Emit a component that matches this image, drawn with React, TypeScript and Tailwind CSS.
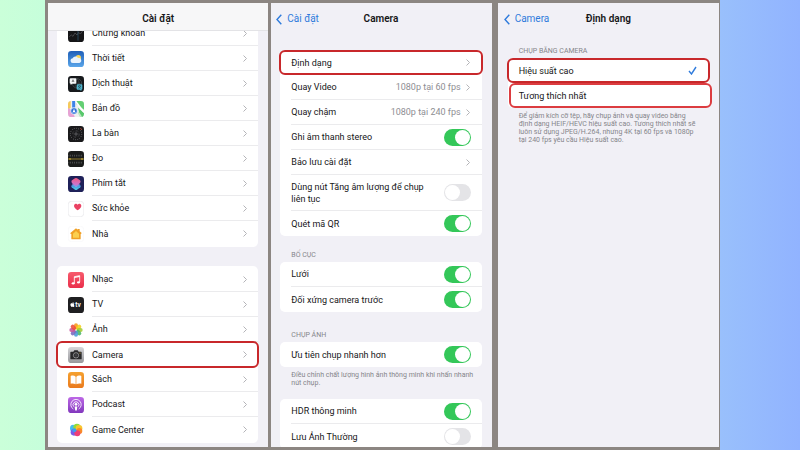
import type { ReactNode } from "react"
import { clsx } from "clsx"
import { FaApple } from "react-icons/fa"

type IconName =
  | "stocks"
  | "weather"
  | "translate"
  | "maps"
  | "compass"
  | "measure"
  | "shortcuts"
  | "health"
  | "home"
  | "music"
  | "tv"
  | "photos"
  | "camera"
  | "books"
  | "podcast"
  | "gamecenter"

const petals = ["#f79a1e", "#f4d21f", "#a5cc39", "#4fb86b", "#4c9fd8", "#7d6bc0", "#c65a9f", "#ee4f3d"]

const artwork: Record<IconName, ReactNode> = {
  stocks: (
    <>
      <rect width="48" height="48" rx="10" fill="#151517" />
      <path d="M4 32l6-5 5 4 6-10 6 6 5-8 5 5 7-9" fill="none" stroke="#5b5b60" strokeWidth="2" />
      <path d="M30 4v40" stroke="#2f5a78" strokeWidth="2" />
    </>
  ),
  weather: (
    <>
      <rect width="48" height="48" rx="10" fill="url(#sky)" />
      <circle cx="31" cy="20" r="8" fill="#fbd65a" />
      <path d="M15 36a7 7 0 0 1-1-14 9 9 0 0 1 16-1 7.500 7.500 0 0 1 4 15z" fill="#e9f3fd" />
    </>
  ),
  translate: (
    <>
      <rect width="48" height="48" rx="10" fill="#16191c" />
      <circle cx="27" cy="22" r="14" fill="none" stroke="#4c5458" strokeWidth="2" />
      <path d="M13 22h28M27 8c-8 8-8 20 0 28M27 8c8 8 8 20 0 28" fill="none" stroke="#4c5458" strokeWidth="1.500" />
      <path d="M8 7h14a3 3 0 0 1 3 3v10a3 3 0 0 1-3 3H13l-5 4v-4a3 3 0 0 1-3-3V10a3 3 0 0 1 3-3z" fill="#f3f5f6" />
      <path d="M12 18l3-7 3 7M13 16h4" fill="none" stroke="#333" strokeWidth="1.500" />
      <path d="M29 25h11a3 3 0 0 1 3 3v10a3 3 0 0 1-3 3v4l-5-4h-6a3 3 0 0 1-3-3V28a3 3 0 0 1 3-3z" fill="#4fb3cb" />
      <path d="M30 30h9M34.500 28v2M38 30c-1 4-4 6-7 7M31 30c1 4 4 6 7 7" fill="none" stroke="#17333b" strokeWidth="1.500" />
    </>
  ),
  maps: (
    <>
      <clipPath id="mapClip">
        <rect width="48" height="48" rx="10" />
      </clipPath>
      <g clipPath="url(#mapClip)">
        <rect width="48" height="48" fill="#eef1ee" />
        <path d="M24 0h24v26L24 8z" fill="#63cf73" />
        <path d="M30 20l18 16v12H36z" fill="#58c86c" />
        <path d="M0 0h8v20L0 26z" fill="#f5c95a" />
        <path d="M0 22c10 2 16 12 20 26H0z" fill="#e6a3d4" />
        <path d="M22 0l26 34" stroke="#fff" strokeWidth="5" />
        <path d="M17 0v20" stroke="#3d83ea" strokeWidth="9" />
        <path d="M30 34l10 14" stroke="#bfe8c4" strokeWidth="5" />
        <circle cx="18" cy="30" r="10" fill="#2f73d9" stroke="#fff" strokeWidth="2" />
        <path d="M18 23l5 13-5-3-5 3z" fill="#fff" />
      </g>
    </>
  ),
  compass: (
    <>
      <rect width="48" height="48" rx="10" fill="#1a1a1c" />
      <circle cx="24" cy="24" r="17" fill="none" stroke="#a5a5a8" strokeWidth="3" strokeDasharray="1.500 5" />
      <circle cx="24" cy="24" r="10" fill="none" stroke="#5e5e62" strokeWidth="1.500" strokeDasharray="9 6" />
      <path d="M24 17v14M17 24h14" stroke="#8f8f92" strokeWidth="1.500" />
      <path d="M38 7l3 4" stroke="#e2553f" strokeWidth="3" />
    </>
  ),
  measure: (
    <>
      <rect width="48" height="48" rx="10" fill="#1a1b1a" />
      <path d="M2 14h44M2 35h44" stroke="#77797a" strokeWidth="5" strokeDasharray="1.500 4" />
      <path d="M0 24h48" stroke="#cfae38" strokeWidth="2" />
      <circle cx="6" cy="24" r="2.500" fill="#e8c63f" />
      <circle cx="42" cy="24" r="2.500" fill="#e8c63f" />
    </>
  ),
  shortcuts: (
    <>
      <rect width="48" height="48" rx="10" fill="#1f2159" />
      <path d="M24 20l13 8q3 3 0 6l-10 7q-3 2-6 0l-10-7q-3-3 0-6z" fill="url(#aqua)" />
      <path d="M21 7q3-2 6 0l9 6q3 3 1 6l-4 6-9 5-10-6-3-5q-2-4 1-6z" fill="url(#rose)" />
      <path d="M13 25l11 7 11-7" fill="none" stroke="#b99be4" strokeWidth="2" />
    </>
  ),
  health: (
    <>
      <rect x=".7" y=".7" width="46.600" height="46.600" rx="10" fill="#fff" stroke="#e2e2e6" strokeWidth="1.800" />
      <path d="M29 28c-7-5-11-9-11-14a6 6 0 0 1 11-3 6 6 0 0 1 11 3c0 5-4 9-11 14z" fill="#ea4263" />
    </>
  ),
  home: (
    <>
      <rect x=".7" y=".7" width="46.600" height="46.600" rx="10" fill="#fff" stroke="#f5f5f6" strokeWidth="1.400" />
      <path d="M24 7l5 4V9h6v7l6 5-2 3h-1v14a2 2 0 0 1-2 2H12a2 2 0 0 1-2-2V24H8l-1-3z" fill="#f0a127" />
      <path d="M24 15l9 8v12H15V23z" fill="#fbd050" />
    </>
  ),
  music: (
    <>
      <rect width="48" height="48" rx="10" fill="url(#tune)" />
      <path d="M19 34V14l16-3v19" fill="none" stroke="#fff" strokeWidth="2.500" />
      <path d="M19 18l16-3v-4l-16 3z" fill="#fff" />
      <ellipse cx="15.500" cy="34" rx="4.500" ry="3.500" fill="#fff" />
      <ellipse cx="31.500" cy="31" rx="4.500" ry="3.500" fill="#fff" />
    </>
  ),
  tv: (
    <>
      <rect width="48" height="48" rx="10" fill="#1f1f21" />
      <FaApple x={5} y={14} width={17} height={17} size={17} color="#fff" />
      <text x="22" y="31" fill="#fff" fontSize="20" fontWeight="600">
        tv
      </text>
    </>
  ),
  photos: (
    <>
      {petals.map((color, i) => (
        <rect
          key={color}
          x="18"
          y="4"
          width="12"
          height="18"
          rx="6"
          fill={color}
          fillOpacity=".9"
          transform={`rotate(${i * 45} 24 24)`}
        />
      ))}
    </>
  ),
  camera: (
    <>
      <rect width="48" height="48" rx="10" fill="url(#steel)" />
      <path d="M9 14h7l3-4h10l3 4h7a2 2 0 0 1 2 2v19a2 2 0 0 1-2 2H9a2 2 0 0 1-2-2V16a2 2 0 0 1 2-2z" fill="#29292b" />
      <circle cx="24" cy="25" r="8" fill="none" stroke="#b4b4b7" strokeWidth="2" />
      <circle cx="24" cy="25" r="4" fill="#414145" />
      <circle cx="36" cy="18" r="1.500" fill="#f5c445" />
    </>
  ),
  books: (
    <>
      <rect width="48" height="48" rx="10" fill="url(#amber)" />
      <path d="M23 14c-4-4-10-4-15-2v23c5-1 11-1 15 2zM25 14c4-4 10-4 15-2v23c-5-1-11-1-15 2z" fill="#fff" />
    </>
  ),
  podcast: (
    <>
      <rect width="48" height="48" rx="10" fill="url(#violet)" />
      <path d="M16 36a15.500 15.500 0 1 1 16 0" fill="none" stroke="#fff" strokeWidth="2.500" />
      <path d="M17 29a9 9 0 1 1 14 0" fill="none" stroke="#fff" strokeWidth="2.500" />
      <circle cx="24" cy="22" r="4" fill="#fff" />
      <path d="M20 29q4-2 8 0l-1.500 11q-2.500 2-5 0z" fill="#fff" />
    </>
  ),
  gamecenter: (
    <>
      <ellipse cx="15" cy="19" rx="9" ry="11" fill="#45bdf0" />
      <circle cx="27" cy="16" r="11" fill="#8fdc3c" />
      <circle cx="33" cy="19" r="10" fill="#f9c62d" />
      <circle cx="18" cy="31" r="10" fill="#7a5be8" />
      <circle cx="34" cy="27" r="9" fill="#f98a28" />
      <circle cx="28" cy="34" r="9" fill="#ee3f75" />
      <circle cx="19" cy="25" r="6" fill="#3f9bf0" />
    </>
  ),
}

function Gradient({ id, from, to }: { id: string; from: string; to: string }) {
  return (
    <linearGradient id={id} x1="0" y1="0" x2="0" y2="1">
      <stop stopColor={from} />
      <stop offset="1" stopColor={to} />
    </linearGradient>
  )
}

function SharedGradients() {
  return (
    <svg aria-hidden="true" width="0" height="0" className="absolute">
      <defs>
        <Gradient id="sky" from="#1f5fb8" to="#5aa6ea" />
        <Gradient id="aqua" from="#3a6fd8" to="#55d0e6" />
        <Gradient id="rose" from="#f0597f" to="#c47be0" />
        <Gradient id="tune" from="#f75a6c" to="#ea2f4b" />
        <Gradient id="steel" from="#d6d6d9" to="#98989c" />
        <Gradient id="amber" from="#f5a12f" to="#ea7a1d" />
        <Gradient id="violet" from="#bd68e6" to="#8238bd" />
      </defs>
    </svg>
  )
}

function AppIcon({ name }: { name: IconName }) {
  return (
    <svg viewBox="0 0 48 48" aria-hidden="true" className="h-4 w-4 shrink-0">
      {artwork[name]}
    </svg>
  )
}

function Chevron() {
  return (
    <svg viewBox="0 0 4 7" aria-hidden="true" className="h-[7px] w-1 shrink-0">
      <path d="M.5 .5l3 3-3 3" fill="none" stroke="#b4b4b8" strokeWidth="1" />
    </svg>
  )
}

function Panel({ className, children }: { className?: string; children: ReactNode }) {
  return (
    <section className={clsx("min-w-0 flex-1 overflow-hidden bg-[#f1f0f6] pr-[10px]", className)}>{children}</section>
  )
}

function NavBar({ title, back }: { title: string; back: string }) {
  return (
    <header className="grid h-8 grid-cols-[1fr_auto_1fr] items-center">
      <a href="#back" className="-ml-1 flex items-center gap-[5px] text-[10px] text-[#2f7bdc]">
        <svg viewBox="0 0 6 11" aria-hidden="true" className="h-[11px] w-[6px]">
          <path d="M5.300 .7L1 5.500l4.300 4.800" fill="none" stroke="currentColor" strokeWidth="1.400" />
        </svg>
        {back}
      </a>
      <h1 className="text-[10px] font-semibold">{title}</h1>
    </header>
  )
}

function Card({ className, children }: { className?: string; children: ReactNode }) {
  return <div className={clsx("rounded-[5px] bg-white", className)}>{children}</div>
}

// Red frame around the row that the reader should tap
function Marker({ className }: { className: string }) {
  return (
    <span className={clsx("pointer-events-none absolute -z-10 rounded-md border-2 bg-white", className)} />
  )
}

const rowLine = "border-b border-[#ebebed] group-last:border-b-0"

function AppRow({ icon, label, marked }: { icon: IconName; label: string; marked?: boolean }) {
  return (
    <a href={`#${icon}`} className="group relative isolate flex h-[25px] items-center gap-2 pl-[11px]">
      <AppIcon name={icon} />
      <span
        className={clsx("flex h-full flex-1 items-center justify-between pr-[11px]", marked ? "" : rowLine)}
      >
        {label}
        <Chevron />
      </span>
      {marked && <Marker className="-inset-px border-[#c8282b]" />}
    </a>
  )
}

function LinkRow({ label, value, marked }: { label: string; value?: string; marked?: boolean }) {
  return (
    <a href="#detail" className="group relative isolate block h-[25px] pl-[11px]">
      <span className={clsx("flex h-full items-center gap-[5px] pr-3", marked ? "" : rowLine)}>
        <span className="flex-1">{label}</span>
        {value && <span className="text-[#8e8e93]">{value}</span>}
        <Chevron />
      </span>
      {marked && <Marker className="-inset-x-px inset-y-0 border-[#c8282b]" />}
    </a>
  )
}

function ToggleRow({ label, on, tall }: { label: string; on?: boolean; tall?: boolean }) {
  return (
    <label className="group block pl-[11px]">
      <span className={clsx("flex items-center justify-between pr-[11px]", tall ? "h-9" : "h-[25px]", rowLine)}>
        <span className="max-w-[140px]">{label}</span>
        <input
          type="checkbox"
          role="switch"
          defaultChecked={on}
          className="h-[17px] w-[27px] shrink-0 appearance-none rounded-full bg-[#e4e4e7] p-px before:block before:size-[15px] before:rounded-full before:bg-white checked:bg-[#34c759] checked:before:ml-[10px]"
        />
      </span>
    </label>
  )
}

function ChoiceRow({ label, checked, marker }: { label: string; checked?: boolean; marker: string }) {
  return (
    <label className="relative isolate flex h-[25px] items-center justify-between pr-3 pl-[11px]">
      {label}
      <input type="radio" name="format" defaultChecked={checked} className="peer sr-only" />
      <svg viewBox="0 0 9 9" aria-hidden="true" className="hidden size-[9px] peer-checked:block">
        <path d="M1 5l2.500 3L8 1" fill="none" stroke="#2f7bdc" strokeWidth="1.400" />
      </svg>
      <Marker className={marker} />
    </label>
  )
}

function Caption({ className, children }: { className?: string; children: ReactNode }) {
  return <h2 className={clsx("pl-[11px] text-[7px] leading-[10px] text-[#85858a] uppercase", className)}>{children}</h2>
}

function Footnote({ className, children }: { className: string; children: ReactNode }) {
  return <p className={clsx("pt-1 pl-[11px] text-[7px] leading-[8px] text-[#85858a]", className)}>{children}</p>
}

const systemApps: { icon: IconName; label: string }[] = [
  { icon: "stocks", label: "Chứng khoán" },
  { icon: "weather", label: "Thời tiết" },
  { icon: "translate", label: "Dịch thuật" },
  { icon: "maps", label: "Bản đồ" },
  { icon: "compass", label: "La bàn" },
  { icon: "measure", label: "Đo" },
  { icon: "shortcuts", label: "Phím tắt" },
  { icon: "health", label: "Sức khỏe" },
  { icon: "home", label: "Nhà" },
]

const mediaApps: { icon: IconName; label: string }[] = [
  { icon: "music", label: "Nhạc" },
  { icon: "tv", label: "TV" },
  { icon: "photos", label: "Ảnh" },
  { icon: "camera", label: "Camera" },
  { icon: "books", label: "Sách" },
  { icon: "podcast", label: "Podcast" },
  { icon: "gamecenter", label: "Game Center" },
]

function SettingsPanel() {
  return (
    <Panel className="pl-[9px]">
      {/* Header stays above the scrolled list */}
      <header className="relative z-10 -mr-[10px] -ml-[9px] flex h-7 items-center justify-center border-b border-[#e3e3e6] bg-[#f7f7f8] pt-[5px]">
        <h1 className="text-[10px] font-semibold">Cài đặt</h1>
      </header>
      <Card className="-mt-[11px] py-px">
        {systemApps.map((app) => (
          <AppRow key={app.icon} {...app} />
        ))}
      </Card>
      <Card className="mt-[19px] py-px">
        {mediaApps.map((app) => (
          <AppRow key={app.icon} {...app} marked={app.icon === "camera"} />
        ))}
      </Card>
    </Panel>
  )
}

function CameraPanel() {
  return (
    <Panel className="ml-[3px] pl-[9px]">
      <NavBar title="Camera" back="Cài đặt" />
      <Card className="mt-[15px]">
        <LinkRow label="Định dạng" marked />
        <LinkRow label="Quay Video" value="1080p tại 60 fps" />
        <LinkRow label="Quay chậm" value="1080p tại 240 fps" />
        <ToggleRow label="Ghi âm thanh stereo" on />
        <LinkRow label="Bảo lưu cài đặt" />
        <ToggleRow label="Dùng nút Tăng âm lượng để chụp liên tục" tall />
        <ToggleRow label="Quét mã QR" on />
      </Card>
      <Caption className="mt-[14px] mb-[2px]">Bố cục</Caption>
      <Card>
        <ToggleRow label="Lưới" on />
        <ToggleRow label="Đối xứng camera trước" on />
      </Card>
      <Caption className="mt-[18px] mb-[2px]">Chụp ảnh</Caption>
      <Card>
        <ToggleRow label="Ưu tiên chụp nhanh hơn" on />
      </Card>
      <Footnote className="pr-1">Điều chỉnh chất lượng hình ảnh thông minh khi nhấn nhanh nút chụp.</Footnote>
      <Card className="mt-3">
        <ToggleRow label="HDR thông minh" on />
        <ToggleRow label="Lưu Ảnh Thường" />
      </Card>
    </Panel>
  )
}

function FormatPanel() {
  return (
    <Panel className="ml-[6px] pl-[10px]">
      <NavBar title="Định dạng" back="Camera" />
      <Caption className="mt-[11px] mb-[2px]">Chụp bằng camera</Caption>
      <Card>
        <ChoiceRow label="Hiệu suất cao" checked marker="inset-y-0 -inset-x-px border-[#c8282b]" />
        <ChoiceRow label="Tương thích nhất" marker="inset-y-0 left-px -right-[3px] border-[#dc3c40]" />
      </Card>
      <Footnote className="pr-3">
        Để giảm kích cỡ tệp, hãy chụp ảnh và quay video bằng định dạng HEIF/HEVC hiệu suất cao. Tương thích nhất sẽ luôn
        sử dụng JPEG/H.264, nhưng 4K tại 60 fps và 1080p tại 240 fps yêu cầu Hiệu suất cao.
      </Footnote>
    </Panel>
  )
}

export default function App() {
  return (
    <div className="flex h-screen overflow-hidden bg-white font-[Roboto,'Noto_Sans',sans-serif] text-[9px] leading-3 text-[#161618]">
      <SharedGradients />
      <div className="w-[45px] shrink-0 bg-linear-to-r from-[#caffd9] to-[#c6fedb]" />
      <main className="flex flex-1 bg-[#8c8682] py-[3px] pr-px pl-[3px]">
        <SettingsPanel />
        <CameraPanel />
        <FormatPanel />
      </main>
      <div className="w-20 shrink-0 bg-linear-to-r from-[#99c0fc] to-[#91b3ff]" />
    </div>
  )
}
